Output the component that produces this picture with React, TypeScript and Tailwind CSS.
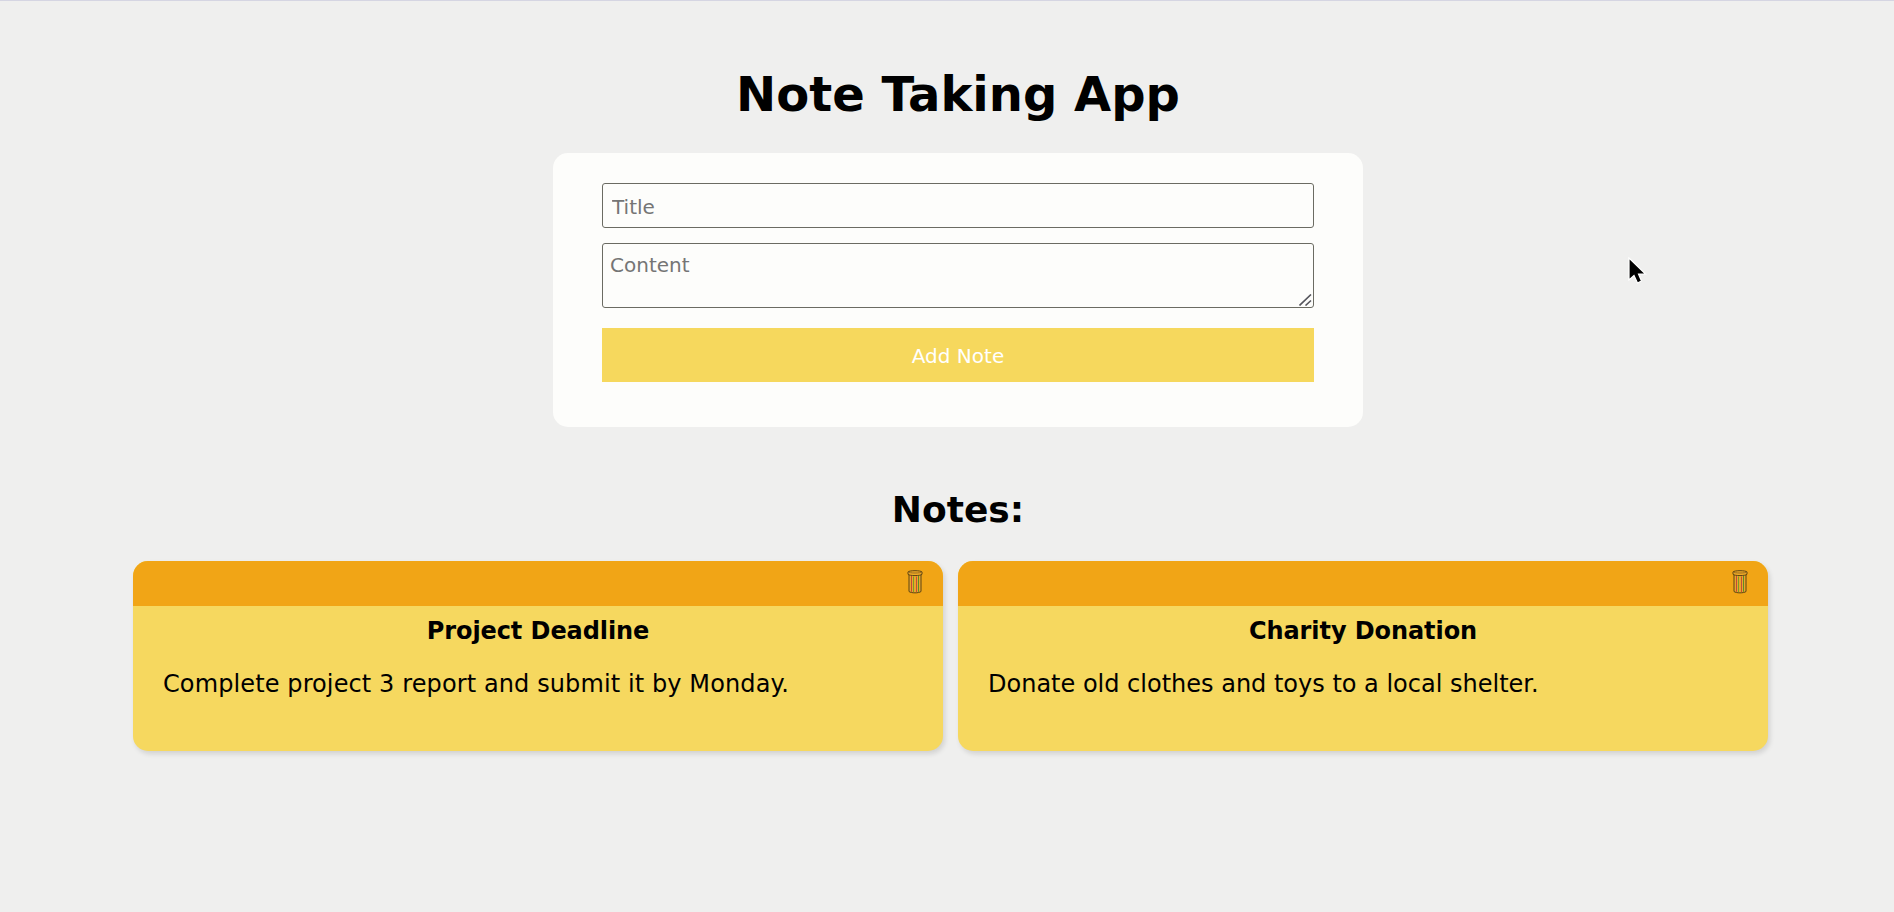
const notes = [
  {
    title: 'Project Deadline',
    content: 'Complete project 3 report and submit it by Monday.',
    tracking: 'tracking-[0.11px]',
  },
  {
    title: 'Charity Donation',
    content: 'Donate old clothes and toys to a local shelter.',
    tracking: 'tracking-[0px]',
  },
];

function TrashIcon() {
  return (
    <svg width="16" height="24" viewBox="0 0 16 24" fill="none" stroke="#5c4515" strokeWidth="1">
      <path d="M2 5 V21.5 C4 23.3 12 23.3 14 21.5 V5" fill="#eba628" />
      <path d="M4.5 6 V21.8" stroke="#c04a3a" />
      <path d="M6.5 6.5 V22" stroke="#7d9a28" />
      <path d="M9.5 6.5 V22" stroke="#c0503a" />
      <path d="M11.5 6 V21.8" stroke="#5c8a28" />
      <path d="M1 1.9 C2.5 .3 13.5 .3 15 1.9 V4.3 C13.5 6 2.5 6 1 4.3 Z" fill="#efaa26" />
      <path d="M1 2.1 C3 3.3 13 3.3 15 2.1" stroke="#9b6c20" />
    </svg>
  );
}

export default function App() {
  return (
    <div className="relative min-h-[912px] w-full overflow-hidden border-t border-[#d5d5e2] bg-[#efefee] font-['DejaVu_Sans',Verdana,sans-serif] text-black">
      <main className="ml-[133px] w-[1650px] pt-[64px]">
        <h1 className="text-center text-[48px] leading-[58px] font-bold whitespace-nowrap">
          <span>Note Taking App</span>
        </h1>
        <form className="mx-auto mt-[30px] flex h-[274px] w-[810px] flex-col rounded-[15px] bg-[#fdfdfb] px-[49px] pt-[30px]">
          <input
            placeholder="Title"
            className="h-[45px] w-full rounded-[3px] border border-[#6b6b62] px-[9px] pt-[2px] text-[20px] placeholder:text-[#757575]"
          />
          <div className="relative mt-[15px] h-[65px] w-full">
            <textarea
              placeholder="Content"
              className="block h-full w-full resize-none rounded-[3px] border border-[#6b6b62] px-[7px] py-[8px] text-[20px] leading-[26px] placeholder:text-[#757575]"
            />
            <svg
              className="absolute right-[2px] bottom-[2px]"
              width="13"
              height="12"
              viewBox="0 0 13 12"
              stroke="#55555c"
              strokeWidth="1.6"
            >
              <path d="M.5 11.5 L12 .5 M6.5 11.5 L12 6.5" />
            </svg>
          </div>
          <button type="button" className="mt-5 h-[54px] w-full bg-[#f6d85d] pt-[2px] text-[20px] text-white">
            Add Note
          </button>
        </form>
        <h2 className="mt-[61px] text-center text-[36px] leading-[44px] font-bold">
          <span>Notes:</span>
        </h2>
        <section className="mt-[29px] flex gap-[15px]">
          {notes.map((note) => (
            <article
              key={note.title}
              className="h-[190px] w-[810px] shrink-0 overflow-hidden rounded-[15px] bg-[#f6d85f] shadow-[2px_3px_5px_rgba(0,0,0,0.12)]"
            >
              <header className="flex h-[45px] justify-end bg-[#f1a516] pt-[9px] pr-[20px]">
                <button type="button" aria-label="Delete" className="h-6 w-4">
                  <TrashIcon />
                </button>
              </header>
              <h3 className="mt-[10px] text-center text-[24px] leading-[30px] font-bold tracking-[-0.08px]">
                <span>{note.title}</span>
              </h3>
              <p className={`mt-[23px] ml-[30px] text-[24px] leading-[30px] whitespace-nowrap ${note.tracking}`}>
                <span>{note.content}</span>
              </p>
            </article>
          ))}
        </section>
      </main>
      <svg className="absolute top-[256px] left-[1628px]" width="20" height="28" viewBox="0 0 20 28">
        <path d="M1 1 V23 L6 18.5 L9.5 26 L13.5 24 L10.5 17 H17.5 Z" fill="black" stroke="white" strokeWidth="1.2" />
      </svg>
    </div>
  );
}
